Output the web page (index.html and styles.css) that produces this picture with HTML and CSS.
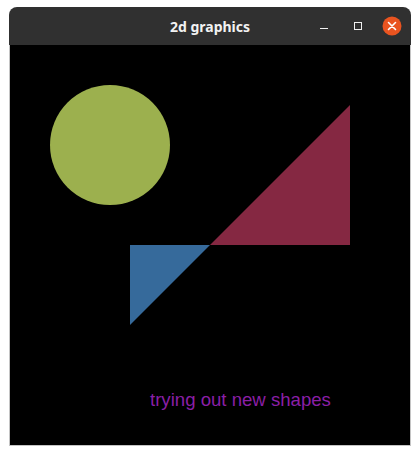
FILE: index.html
```html
<!DOCTYPE html>
<html>
<head>
<meta charset="utf-8">
<link rel="stylesheet" href="styles.css">
</head>
<body>
<div class="window">
  <div class="titlebar">
    <div class="title">2d graphics</div>
    <div class="controls">
      <span class="btn min"><svg width="10" height="10" viewBox="0 0 10 10"><rect x="1" y="7" width="8" height="1" fill="#f0f0f0"/></svg></span>
      <span class="btn max"><svg width="10" height="10" viewBox="0 0 10 10"><rect x="2.5" y="1.5" width="7" height="7" fill="none" stroke="#f0f0f0" stroke-width="1"/></svg></span>
      <span class="btn close"><svg width="20" height="20" viewBox="0 0 20 20"><circle cx="10" cy="10" r="9.5" fill="#e95420"/><path d="M6.5 6.5 L13.5 13.5 M13.5 6.5 L6.5 13.5" stroke="#fff" stroke-width="1.6" stroke-linecap="round"/></svg></span>
    </div>
  </div>
  <div class="canvas">
    <svg class="scene" width="400" height="400" viewBox="0 0 400 400">
      <circle cx="100" cy="100" r="60" fill="#9cb04e"/>
      <polygon points="200,200 340,200 340,60" fill="#852842"/>
      <polygon points="120,200 200,200 120,280" fill="#366a9b"/>
      <text x="140" y="360.5" class="caption">trying out new shapes</text>
    </svg>
  </div>
</div>
</body>
</html>
```
FILE: styles.css
```css
html, body {
  margin: 0;
  padding: 0;
  background: #ffffff;
}
.window {
  margin: 7px 0 0 9px;
  width: 402px;
}
.titlebar {
  position: relative;
  height: 38px;
  background: #303030;
  border-radius: 8px 8px 0 0;
  display: flex;
  align-items: center;
  justify-content: center;
}
.title {
  color: #f2f2f2;
  font-family: "Noto Sans", "DejaVu Sans", sans-serif;
  font-weight: bold;
  font-size: 14px;
}
.controls {
  position: absolute;
  right: 9px;
  top: 9px;
  display: flex;
  align-items: center;
}
.btn {
  display: flex;
  align-items: center;
  justify-content: center;
}
.btn.min { width: 10px; height: 20px; margin-right: 23px; }
.btn.max { width: 10px; height: 20px; margin-right: 20px; }
.btn.close { width: 20px; height: 20px; }
.canvas {
  width: 400px;
  height: 400px;
  background: #000;
  border: 1px solid #c4c4c4;
  border-top: 0;
}
.scene {
  display: block;
}
.caption {
  fill: #8a1fa6;
  font-family: "Liberation Sans", Arial, sans-serif;
  font-size: 18.6px;
}
```
